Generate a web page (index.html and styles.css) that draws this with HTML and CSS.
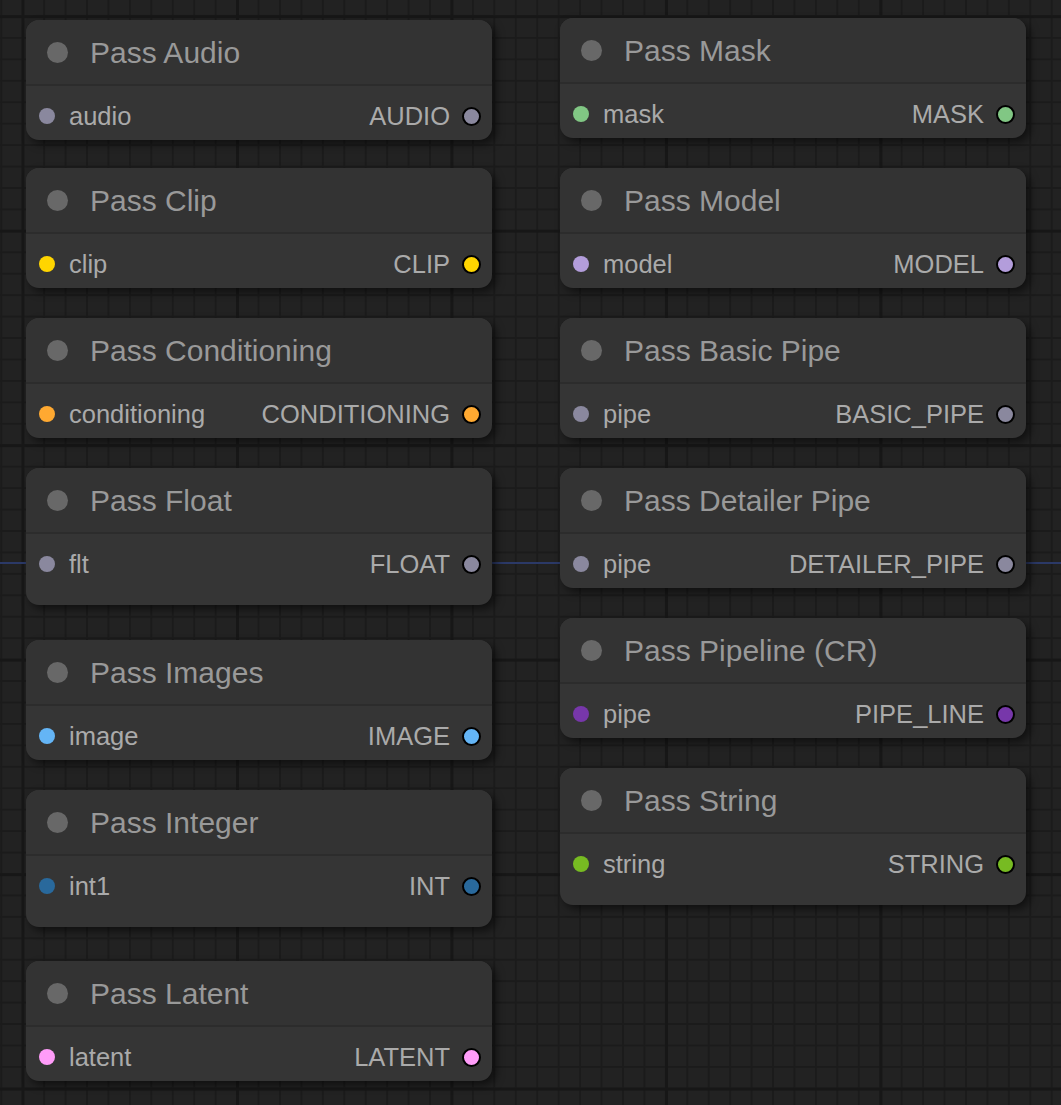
FILE: index.html
```html
<!DOCTYPE html>
<html lang="en">
<head>
<meta charset="utf-8">
<title>Nodes</title>
<link rel="stylesheet" href="styles.css">
</head>
<body>
<div class="canvas">
  <div class="link"></div>

  <div class="node" style="left:26px;top:20px">
    <div class="title"><span class="tdot"></span><span class="tname">Pass Audio</span></div>
    <div class="body"><div class="slots">
      <div class="in"><span class="dot c-gray"></span>audio</div>
      <div class="out">AUDIO<span class="odot c-gray"></span></div>
    </div></div>
  </div>

  <div class="node" style="left:26px;top:168px">
    <div class="title"><span class="tdot"></span><span class="tname">Pass Clip</span></div>
    <div class="body"><div class="slots">
      <div class="in"><span class="dot c-clip"></span>clip</div>
      <div class="out">CLIP<span class="odot c-clip"></span></div>
    </div></div>
  </div>

  <div class="node" style="left:26px;top:318px">
    <div class="title"><span class="tdot"></span><span class="tname">Pass Conditioning</span></div>
    <div class="body"><div class="slots">
      <div class="in"><span class="dot c-cond"></span>conditioning</div>
      <div class="out">CONDITIONING<span class="odot c-cond"></span></div>
    </div></div>
  </div>

  <div class="node tall" style="left:26px;top:468px">
    <div class="title"><span class="tdot"></span><span class="tname">Pass Float</span></div>
    <div class="body"><div class="slots">
      <div class="in"><span class="dot c-gray"></span>flt</div>
      <div class="out">FLOAT<span class="odot c-gray"></span></div>
    </div></div>
  </div>

  <div class="node" style="left:26px;top:640px">
    <div class="title"><span class="tdot"></span><span class="tname">Pass Images</span></div>
    <div class="body"><div class="slots">
      <div class="in"><span class="dot c-image"></span>image</div>
      <div class="out">IMAGE<span class="odot c-image"></span></div>
    </div></div>
  </div>

  <div class="node tall" style="left:26px;top:790px">
    <div class="title"><span class="tdot"></span><span class="tname">Pass Integer</span></div>
    <div class="body"><div class="slots">
      <div class="in"><span class="dot c-int"></span>int1</div>
      <div class="out">INT<span class="odot c-int"></span></div>
    </div></div>
  </div>

  <div class="node" style="left:26px;top:961px">
    <div class="title"><span class="tdot"></span><span class="tname">Pass Latent</span></div>
    <div class="body"><div class="slots">
      <div class="in"><span class="dot c-latent"></span>latent</div>
      <div class="out">LATENT<span class="odot c-latent"></span></div>
    </div></div>
  </div>

  <div class="node" style="left:560px;top:18px">
    <div class="title"><span class="tdot"></span><span class="tname">Pass Mask</span></div>
    <div class="body"><div class="slots">
      <div class="in"><span class="dot c-mask"></span>mask</div>
      <div class="out">MASK<span class="odot c-mask"></span></div>
    </div></div>
  </div>

  <div class="node" style="left:560px;top:168px">
    <div class="title"><span class="tdot"></span><span class="tname">Pass Model</span></div>
    <div class="body"><div class="slots">
      <div class="in"><span class="dot c-model"></span>model</div>
      <div class="out">MODEL<span class="odot c-model"></span></div>
    </div></div>
  </div>

  <div class="node" style="left:560px;top:318px">
    <div class="title"><span class="tdot"></span><span class="tname">Pass Basic Pipe</span></div>
    <div class="body"><div class="slots">
      <div class="in"><span class="dot c-gray"></span>pipe</div>
      <div class="out">BASIC_PIPE<span class="odot c-gray"></span></div>
    </div></div>
  </div>

  <div class="node" style="left:560px;top:468px">
    <div class="title"><span class="tdot"></span><span class="tname">Pass Detailer Pipe</span></div>
    <div class="body"><div class="slots">
      <div class="in"><span class="dot c-gray"></span>pipe</div>
      <div class="out">DETAILER_PIPE<span class="odot c-gray"></span></div>
    </div></div>
  </div>

  <div class="node" style="left:560px;top:618px">
    <div class="title"><span class="tdot"></span><span class="tname">Pass Pipeline (CR)</span></div>
    <div class="body"><div class="slots">
      <div class="in"><span class="dot c-pipeline"></span>pipe</div>
      <div class="out">PIPE_LINE<span class="odot c-pipeline"></span></div>
    </div></div>
  </div>

  <div class="node tall" style="left:560px;top:768px">
    <div class="title"><span class="tdot"></span><span class="tname">Pass String</span></div>
    <div class="body"><div class="slots">
      <div class="in"><span class="dot c-string"></span>string</div>
      <div class="out">STRING<span class="odot c-string"></span></div>
    </div></div>
  </div>
</div>
</body>
</html>
```

FILE: styles.css
```css
html, body {
  margin: 0;
  padding: 0;
}

body {
  width: 1061px;
  height: 1105px;
  overflow: hidden;
  background: #222222;
  font-family: "Liberation Sans", Arial, sans-serif;
}

.canvas {
  position: relative;
  width: 1061px;
  height: 1105px;
  background-color: #222222;
  background-image:
    linear-gradient(to right, #171717 3px, transparent 3px),
    linear-gradient(to bottom, #171717 3px, transparent 3px),
    linear-gradient(to right, #1b1b1b 2px, transparent 2px),
    linear-gradient(to bottom, #1b1b1b 2px, transparent 2px);
  background-size:
    214.5px 100%,
    100% 214.5px,
    21.45px 100%,
    100% 21.45px;
  background-position:
    21.5px 0,
    0 15.2px,
    0.3px 0,
    0 15.5px;
}

.link {
  position: absolute;
  left: 0;
  top: 562px;
  width: 1061px;
  height: 2px;
  background: #2b3967;
}

.node {
  position: absolute;
  width: 466px;
  border-radius: 13px;
  background: #353535;
  box-shadow: 4px 4px 9px rgba(0, 0, 0, 0.55);
  overflow: hidden;
}

.title {
  height: 64px;
  display: flex;
  align-items: center;
  padding-left: 21px;
  gap: 22px;
  background: #333333;
  border-bottom: 2px solid #2c2c2c;
}

.tdot {
  width: 21px;
  height: 21px;
  border-radius: 50%;
  background: #686868;
  flex: none;
}

.tname {
  font-size: 30px;
  line-height: 1;
  color: #999999;
  white-space: nowrap;
  padding-top: 2px;
}

.body {
  padding: 9px 0 3px 0;
}

.tall .body {
  padding-bottom: 20px;
}

.slots {
  height: 42px;
  display: flex;
  align-items: center;
  justify-content: space-between;
  padding: 0 11px 0 13px;
  font-size: 25.5px;
  line-height: 1;
  color: #aaaaaa;
}

.in, .out {
  display: flex;
  align-items: center;
  white-space: nowrap;
}

.in {
  gap: 14px;
}

.out {
  gap: 12px;
}

.dot {
  width: 16px;
  height: 16px;
  border-radius: 50%;
  flex: none;
  margin-top: -2px;
}

.odot {
  width: 15px;
  height: 15px;
  border-radius: 50%;
  border: 2px solid #000000;
  flex: none;
  margin-top: -2px;
}

.in, .out {
  padding-top: 2px;
}

.c-gray { background: #8a889e; }
.c-clip { background: #ffd500; }
.c-cond { background: #ffa931; }
.c-image { background: #64b5f6; }
.c-int { background: #29699c; }
.c-latent { background: #ff9cf9; }
.c-mask { background: #81c784; }
.c-model { background: #b39ddb; }
.c-pipeline { background: #7737aa; }
.c-string { background: #77bb22; }
```
